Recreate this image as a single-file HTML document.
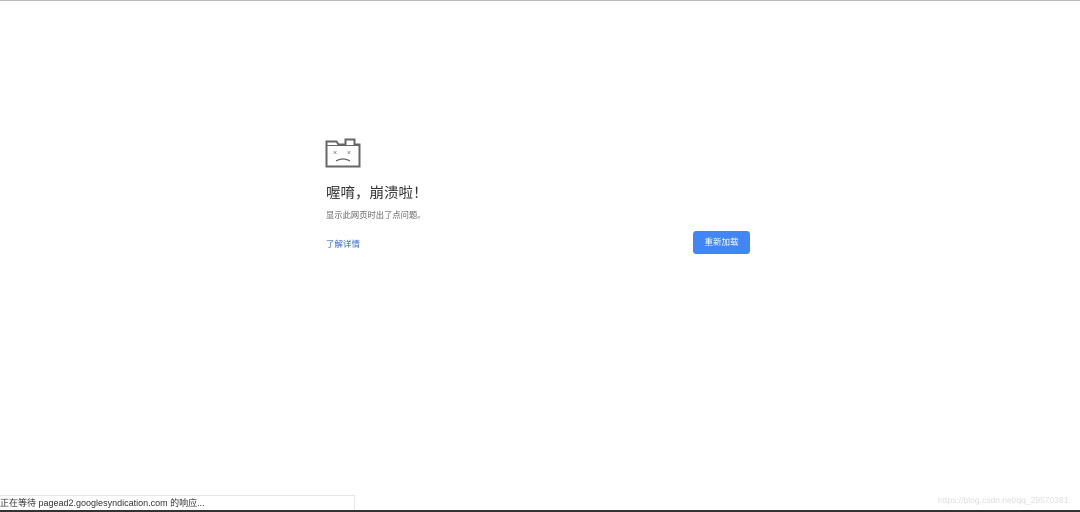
<!DOCTYPE html>
<html><head><meta charset="utf-8"><style>
body{margin:0;width:1080px;height:512px;background:#fff;position:relative;overflow:hidden;font-family:"Liberation Sans","Noto Sans CJK SC",sans-serif;}
.top{position:absolute;left:0;top:0;width:1080px;height:1px;background:#bbb}
.bot{position:absolute;left:0;top:510px;width:1080px;height:2px;background:#333}
.t{position:absolute;white-space:nowrap}
</style></head><body>
<div class="top"></div>
<svg class="t" style="left:325px;top:138px" width="36" height="30" viewBox="0 0 36 30">
<path d="M1.5 28.5V3.5h10l2 3h7V1.5h9v5h5v22z" fill="none" stroke="#666" stroke-width="2"/>
<path d="M1 7.5h34" stroke="#666" stroke-width="1"/>
<text x="8" y="17" font-size="7" fill="#666" font-family="Liberation Sans">×</text>
<text x="22" y="17" font-size="7" fill="#666" font-family="Liberation Sans">×</text>
<path d="M11 23q7-4 14 0" fill="none" stroke="#666" stroke-width="1.2"/>
</svg>
<div class="t" style="left:326px;top:182px;font-size:14.5px;color:#333">喔唷，崩溃啦！</div>
<div class="t" style="left:326px;top:209px;font-size:8.3px;color:#666">显示此网页时出了点问题。</div>
<div class="t" style="left:326px;top:238px;font-size:8.5px;color:#3367d6">了解详情</div>
<div class="t" style="left:693px;top:231px;width:57px;height:23px;background:#4285f4;border-radius:3px;color:#fff;font-size:8.5px;line-height:23px;text-align:center">重新加载</div>
<div class="t" style="left:0;top:495px;width:354px;height:14px;border:1px solid #e6e6e6;border-left:none;background:#fff;font-size:9px;line-height:14px;color:#333">正在等待 pagead2.googlesyndication.com 的响应...</div>
<div class="t" style="left:938px;top:495px;font-size:8.5px;color:#ddd">https://blog.csdn.net/qq_29570381</div>
<div class="bot"></div>
</body></html>
